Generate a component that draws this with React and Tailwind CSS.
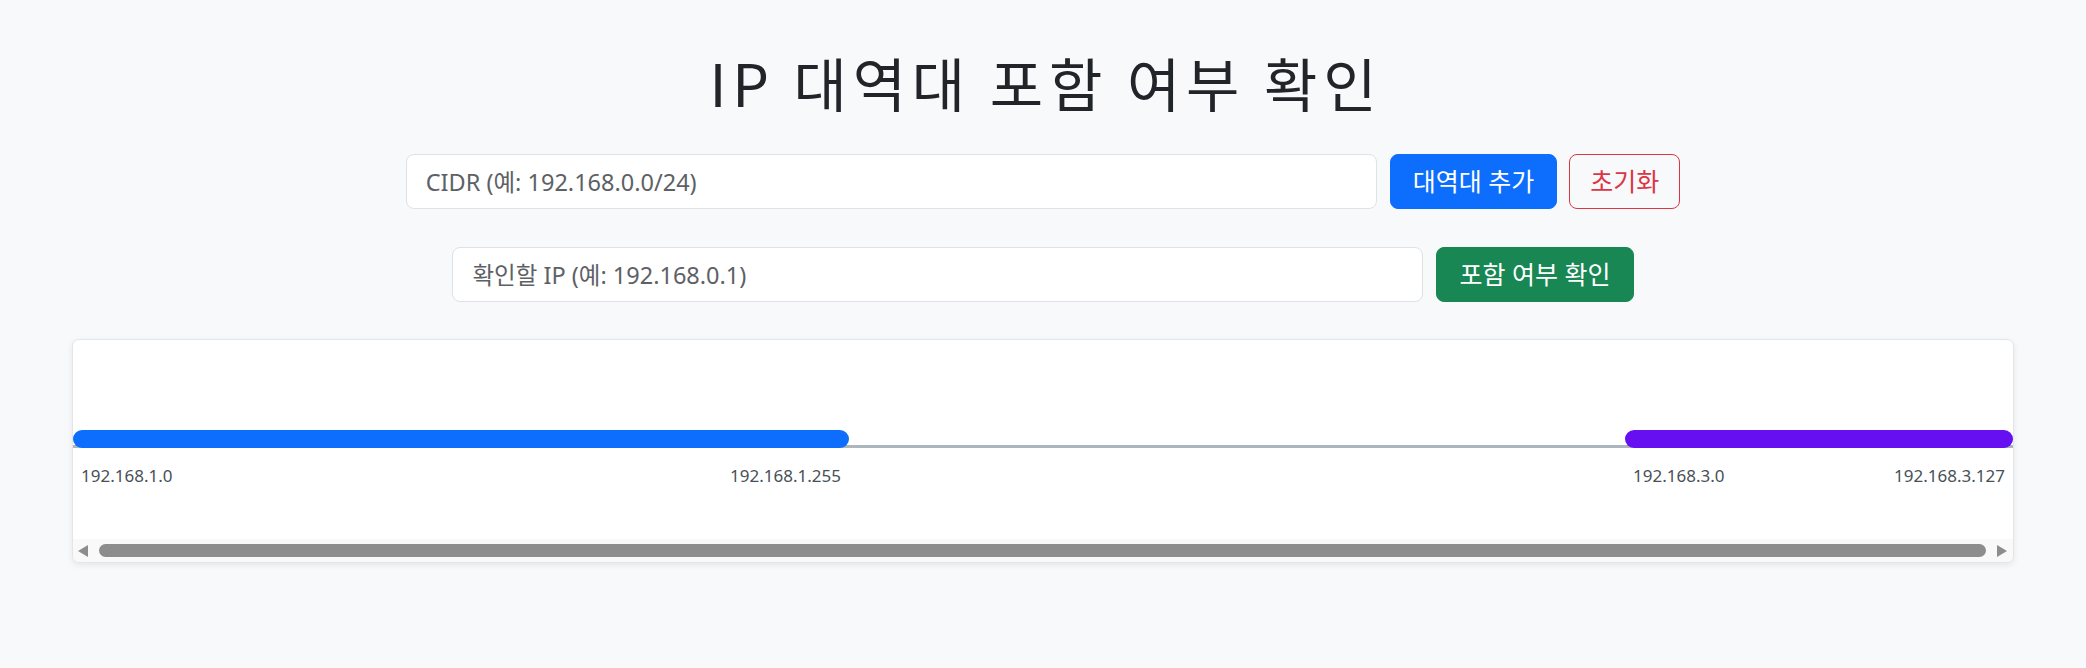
import React from 'react';

const FONT = { fontFamily: '"Noto Sans", "Noto Sans CJK KR", sans-serif' };

// 192.168.1.0 ~ 192.168.3.127 기준 타임라인
const START = 256; // 192.168.1.0 offset from 192.168.0.0
const TOTAL = 640;

const RANGES = [
  { from: 256, size: 256, color: 'bg-[#0d6efd]', first: '192.168.1.0', last: '192.168.1.255' },
  { from: 768, size: 128, color: 'bg-[#6610f2]', first: '192.168.3.0', last: '192.168.3.127' },
];

const pct = (n) => `${(n / TOTAL) * 100}%`;

export default function App() {
  return (
    <div className="min-h-[668px] bg-[#f8f9fa] text-[#212529]" style={FONT}>
      <h1
        className="pt-[48px] pl-[0.1em] text-center text-[58px] leading-[68px] font-normal tracking-[0.1em]"
        style={{ fontFamily: '"Noto Sans CJK KR", "Noto Sans", sans-serif' }}
      >
        IP 대역대 포함 여부 확인
      </h1>

      {/* CIDR 입력 */}
      <div className="mt-[38px] flex justify-center gap-3">
        <input
          className="h-[55px] w-[971px] rounded-[8px] border border-[#dee2e6] bg-white pl-[19px] text-[23.5px] outline-none placeholder:text-[#5d6166]"
          placeholder="CIDR (예: 192.168.0.0/24)"
        />
        <button className="ml-px h-[55px] rounded-[8px] border border-[#0d6efd] bg-[#0d6efd] px-[22px] text-[25px] text-white">
          대역대 추가
        </button>
        <button className="h-[55px] rounded-[8px] border border-[#dc3545] bg-transparent px-5 text-[25px] text-[#dc3545]">
          초기화
        </button>
      </div>

      {/* IP 확인 */}
      <div className="mt-[38px] flex justify-center gap-[13px]">
        <input
          className="h-[55px] w-[971px] rounded-[8px] border border-[#dee2e6] bg-white pl-[19px] text-[23.5px] outline-none placeholder:text-[#5d6166]"
          placeholder="확인할 IP (예: 192.168.0.1)"
        />
        <button className="h-[55px] rounded-[8px] border border-[#198754] bg-[#198754] px-[22px] text-[25px] text-white">
          포함 여부 확인
        </button>
      </div>

      {/* 타임라인 */}
      <div className="mx-[72px] mt-[37px] overflow-hidden rounded-[7px] border border-[#e2e5e9] bg-white shadow-[0_2px_6px_rgba(0,0,0,0.08)]">
        <div className="h-[199px] pt-[90px]">
          <div className="relative h-[18px]">
            <div className="absolute bottom-0 left-0 h-[3px] w-full bg-[#adb5bd]" />
            {RANGES.map((r) => (
              <div
                key={r.first}
                className={`absolute top-0 h-full rounded-full ${r.color}`}
                style={{ left: pct(r.from - START), width: pct(r.size) }}
              />
            ))}
          </div>
          <div className="relative mt-[15px] h-[26px]">
            {RANGES.map((r) => (
              <div
                key={r.first}
                className="absolute top-0 flex justify-between px-2 text-[17px] leading-[26px] text-[#495057]"
                style={{ left: pct(r.from - START), width: pct(r.size) }}
              >
                <span>{r.first}</span>
                <span>{r.last}</span>
              </div>
            ))}
          </div>
        </div>

        {/* 가로 스크롤바 */}
        <div className="flex h-[23px] items-center bg-[#f9f9f9] pl-[5px] pr-[6px]">
          <svg width="10" height="12" viewBox="0 0 10 12">
            <path d="M10 0 L0 6 L10 12 Z" fill="#8d8d8d" />
          </svg>
          <div className="ml-[11px] h-[13px] flex-1 rounded-full bg-[#8d8d8d]" />
          <svg className="ml-[11px]" width="10" height="12" viewBox="0 0 10 12">
            <path d="M0 0 L10 6 L0 12 Z" fill="#8d8d8d" />
          </svg>
        </div>
      </div>
    </div>
  );
}
